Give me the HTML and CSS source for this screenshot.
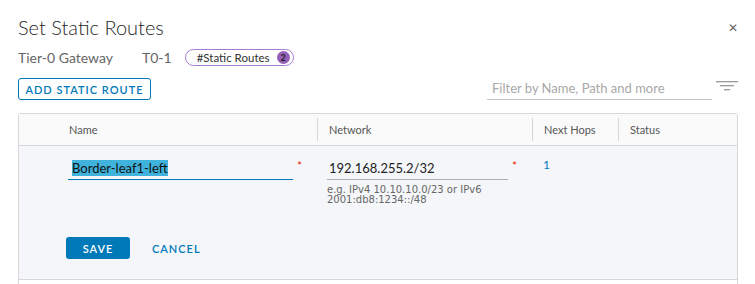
FILE: index.html
```html
<!DOCTYPE html>
<html>
<head>
	<meta charset="utf-8">
	<title>Set Static Routes</title>
	<link rel="stylesheet" href="styles.css">
</head>
<body>
	<div class="modal">
		<div class="modal-head">
			<h1 class="title">Set Static Routes</h1>
			<span class="close">&#x2715;</span>
		</div>
		<div class="crumbs">
			<span class="crumb-label">Tier-0 Gateway</span>
			<span class="crumb-value">T0-1</span>
			<span class="pill">#Static Routes <b class="badge">2</b></span>
		</div>
		<div class="toolbar">
			<button class="btn-outline">ADD STATIC ROUTE</button>
			<div class="filter">
				<span class="filter-input">Filter by Name, Path and more</span>
				<svg class="filter-icon" width="22" height="10" viewBox="0 0 22 10">
					<rect x="0" y="0" width="22" height="1.3" fill="#9a9a9a"/>
					<rect x="4" y="4" width="14" height="1.3" fill="#9a9a9a"/>
					<rect x="8" y="8" width="6" height="1.3" fill="#9a9a9a"/>
				</svg>
			</div>
		</div>

		<div class="grid">
			<div class="grid-head">
				<div class="th th-name">Name</div>
				<div class="th">Network</div>
				<div class="th">Next Hops</div>
				<div class="th th-last">Status</div>
			</div>
			<div class="grid-row">
				<div class="cells">
					<div class="cell cell-name">
						<div class="field field-active"><span class="selected">Border-leaf1-left</span></div>
						<span class="req">*</span>
					</div>
					<div class="cell cell-net">
						<div class="net-wrap">
							<div class="field">192.168.255.2/32</div>
							<p class="helper">e.g. IPv4 10.10.10.0/23 or IPv6<br>2001:db8:1234::/48</p>
						</div>
						<span class="req">*</span>
					</div>
					<div class="cell cell-hops"><a class="link">1</a></div>
					<div class="cell"></div>
				</div>
				<div class="actions">
					<button class="btn-primary">SAVE</button>
					<button class="btn-flat">CANCEL</button>
				</div>
			</div>
		</div>
	</div>
</body>
</html>
```

FILE: styles.css
```css
*{
	margin: 0;
	padding: 0;
	box-sizing: border-box;
}
body{
	background: #fff;
	font-family: Lato, "Noto Sans", sans-serif;
	color: #313131;
}
.modal{
	padding: 14px 17px 0 18px;
}
.modal-head{
	display: flex;
	justify-content: space-between;
	align-items: flex-start;
	height: 35px;
}
.title{
	font-weight: 300;
	font-size: 20px;
	line-height: 26px;
	color: #1f1f1f;
}
.close{
	font-size: 12px;
	color: #666;
	margin-top: 6px;
}
.crumbs{
	display: flex;
	align-items: center;
	height: 17px;
	font-size: 14px;
	color: #666;
}
.crumb-value{
	margin-left: 29px;
}
.pill{
	display: inline-flex;
	align-items: center;
	margin-left: 13px;
	height: 17px;
	padding: 0 3px 0 11px;
	border: 1px solid #a77ccf;
	border-radius: 9px;
	font-size: 11.5px;
	color: #313131;
}
.badge{
	display: inline-block;
	width: 13px;
	height: 13px;
	margin-left: 7px;
	border-radius: 50%;
	background: #9460b8;
	color: #222;
	font-size: 9px;
	line-height: 13px;
	text-align: center;
}
.toolbar{
	display: flex;
	justify-content: space-between;
	align-items: flex-end;
	margin-top: 12px;
	height: 22px;
}
.btn-outline{
	height: 22px;
	width: 133px;
	border: 1px solid #0079b8;
	border-radius: 3px;
	background: #fff;
	color: #0079b8;
	font-family: Lato, sans-serif;
	font-size: 11px;
	font-weight: 600;
	letter-spacing: 1px;
}
.filter{
	display: flex;
	align-items: center;
}
.filter-input{
	width: 225px;
	height: 22px;
	padding-left: 5px;
	border-bottom: 1px solid #c4c4c4;
	font-size: 13px;
	line-height: 20px;
	color: #a8a8a8;
}
.filter-icon{
	margin-left: 4px;
	margin-top: -6px;
}
.grid{
	margin-top: 13px;
	width: 720px;
	border: 1px solid #d7d7d7;
	border-bottom: none;
	border-radius: 3px 3px 0 0;
	height: 200px;
}
.grid-head{
	display: grid;
	grid-template-columns: 298px 215px 86px 1fr;
	height: 32px;
	background: #fafafa;
	border-bottom: 1px solid #d7d7d7;
	align-items: center;
}
.th{
	font-size: 11px;
	color: #565656;
	padding-left: 11px;
	border-left: 1px solid #d7d7d7;
	height: 23px;
	line-height: 23px;
}
.th-name{
	border-left: none;
	padding-left: 50px;
}
.grid-row{
	background: #f4f6f9;
	height: 134px;
	border-bottom: 1px solid #d7d7d7;
	padding-top: 13px;
}
.cells{
	display: grid;
	grid-template-columns: 298px 215px 86px 1fr;
	height: 78px;
}
.cell{
	display: flex;
	align-items: flex-start;
}
.cell-name{
	padding-left: 49px;
}
.field{
	height: 21px;
	font-size: 13px;
	line-height: 18px;
	border-bottom: 1px solid #b0b0b0;
	color: #222;
	padding-left: 2px;
}
.field-active{
	width: 225px;
	padding-left: 4px;
	border-bottom: 1px solid #0079b8;
}
.selected{
	background: #3fb3dc;
	color: #111;
}
.req{
	color: #e62700;
	font-size: 12px;
	margin-left: 4px;
	margin-top: -1px;
}
.cell-net{
	padding-left: 10px;
}
.net-wrap{
	width: 181px;
}
.helper{
	margin-top: 5px;
	font-family: "DejaVu Sans", sans-serif;
	font-size: 10px;
	line-height: 10px;
	color: #666;
	white-space: nowrap;
}
.cell-hops{
	padding-left: 11px;
}
.link{
	color: #0079b8;
	font-size: 12px;
	margin-top: -2px;
}
.actions{
	display: flex;
	align-items: center;
	padding-left: 47px;
}
.btn-primary{
	width: 64px;
	height: 22px;
	border: none;
	border-radius: 3px;
	background: #0079b8;
	color: #fff;
	font-family: Lato, sans-serif;
	font-size: 11px;
	font-weight: 600;
	letter-spacing: 1px;
}
.btn-flat{
	margin-left: 22px;
	border: none;
	background: none;
	color: #0079b8;
	font-family: Lato, sans-serif;
	font-size: 11px;
	font-weight: 600;
	letter-spacing: 1px;
}
```
